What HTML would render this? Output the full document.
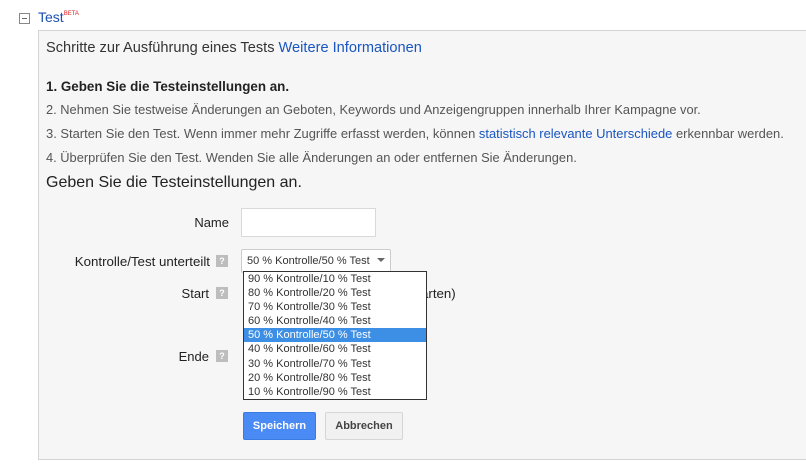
<!DOCTYPE html>
<html><head><style>
body{margin:0;width:806px;height:465px;background:#fff;font-family:"Liberation Sans",Arial,sans-serif;position:relative;overflow:hidden;color:#222}
.a{position:absolute;white-space:nowrap}
.box{position:absolute;left:38px;top:30px;width:780px;height:428px;border:1px solid #d4d4d4;background:#f6f6f6}
.q{position:absolute;width:12px;height:12px;background:#bdbdbd;color:#fff;font-size:9px;font-weight:bold;text-align:center;line-height:12px}
.lbl{position:absolute;font-size:13px;text-align:right;width:200px}
.dd{position:absolute;left:243px;top:271px;width:182px;height:127px;border:1px solid #333;background:#fff;font-size:11px;color:#333}
.dd div{height:14.1px;line-height:14px;padding-left:4px}
.dd .s{background:#3d8ee5;color:#fff}
</style></head><body>
<div class="a" style="left:19px;top:13px;width:9px;height:9px;border:1px solid #888;"></div>
<div class="a" style="left:22px;top:18px;width:5px;height:1px;background:#666"></div>
<div class="a" style="left:38px;top:9px;font-size:14px;color:#1a4fb0">Test<sup style="font-size:6px;color:#d22;vertical-align:7px">BETA</sup></div>
<div class="box"></div>
<div class="a" style="left:46px;top:40px;font-size:14.6px;color:#333">Schritte zur Ausführung eines Tests <span style="color:#1a55c0">Weitere Informationen</span></div>
<div class="a" style="left:46px;top:79px;font-size:13.4px;font-weight:bold;color:#222">1. Geben Sie die Testeinstellungen an.</div>
<div class="a" style="left:46px;top:102px;font-size:12.85px;color:#555">2. Nehmen Sie testweise Änderungen an Geboten, Keywords und Anzeigengruppen innerhalb Ihrer Kampagne vor.</div>
<div class="a" style="left:46px;top:126px;font-size:12.95px;color:#555">3. Starten Sie den Test. Wenn immer mehr Zugriffe erfasst werden, können <span style="color:#1a55c0">statistisch relevante Unterschiede</span> erkennbar werden.</div>
<div class="a" style="left:46px;top:150px;font-size:12.85px;color:#555">4. Überprüfen Sie den Test. Wenden Sie alle Änderungen an oder entfernen Sie Änderungen.</div>
<div class="a" style="left:46px;top:174px;font-size:16px;color:#222">Geben Sie die Testeinstellungen an.</div>
<div class="lbl" style="left:29px;top:215px">Name</div>
<div class="a" style="left:241px;top:208px;width:133px;height:27px;border:1px solid #d9d9d9;background:#fff"></div>
<div class="lbl" style="left:10px;top:254px;font-size:13.3px">Kontrolle/Test unterteilt</div><div class="q" style="left:216px;top:255px">?</div>
<div class="a" style="left:241px;top:249px;width:148px;height:22px;border:1px solid #ccc;background:#fff;border-radius:2px"></div>
<div class="a" style="left:247px;top:255px;font-size:11px;color:#333">50 % Kontrolle/50 % Test</div>
<div class="a" style="left:377px;top:258px;border-left:4px solid transparent;border-right:4px solid transparent;border-top:4px solid #666"></div>
<div class="lbl" style="left:9px;top:286px">Start</div><div class="q" style="left:216px;top:287px">?</div>
<div class="a" style="left:421px;top:286px;font-size:13.3px">arten)</div>
<div class="lbl" style="left:9px;top:349px">Ende</div><div class="q" style="left:216px;top:350px">?</div>
<div class="dd">
<div>90 % Kontrolle/10 % Test</div><div>80 % Kontrolle/20 % Test</div><div>70 % Kontrolle/30 % Test</div><div>60 % Kontrolle/40 % Test</div><div class="s">50 % Kontrolle/50 % Test</div><div>40 % Kontrolle/60 % Test</div><div>30 % Kontrolle/70 % Test</div><div>20 % Kontrolle/80 % Test</div><div>10 % Kontrolle/90 % Test</div>
</div>
<div class="a" style="left:243px;top:412px;width:73px;height:28px;background:#4a8af4;border:1px solid #3b7ae0;border-radius:2px;color:#fff;font-size:11px;font-weight:bold;text-align:center;line-height:26px;box-sizing:border-box">Speichern</div>
<div class="a" style="left:325px;top:412px;width:78px;height:28px;background:#f1f1f1;border:1px solid #d6d6d6;border-radius:2px;color:#444;font-size:11px;font-weight:bold;text-align:center;line-height:26px;box-sizing:border-box">Abbrechen</div>
</body></html>
